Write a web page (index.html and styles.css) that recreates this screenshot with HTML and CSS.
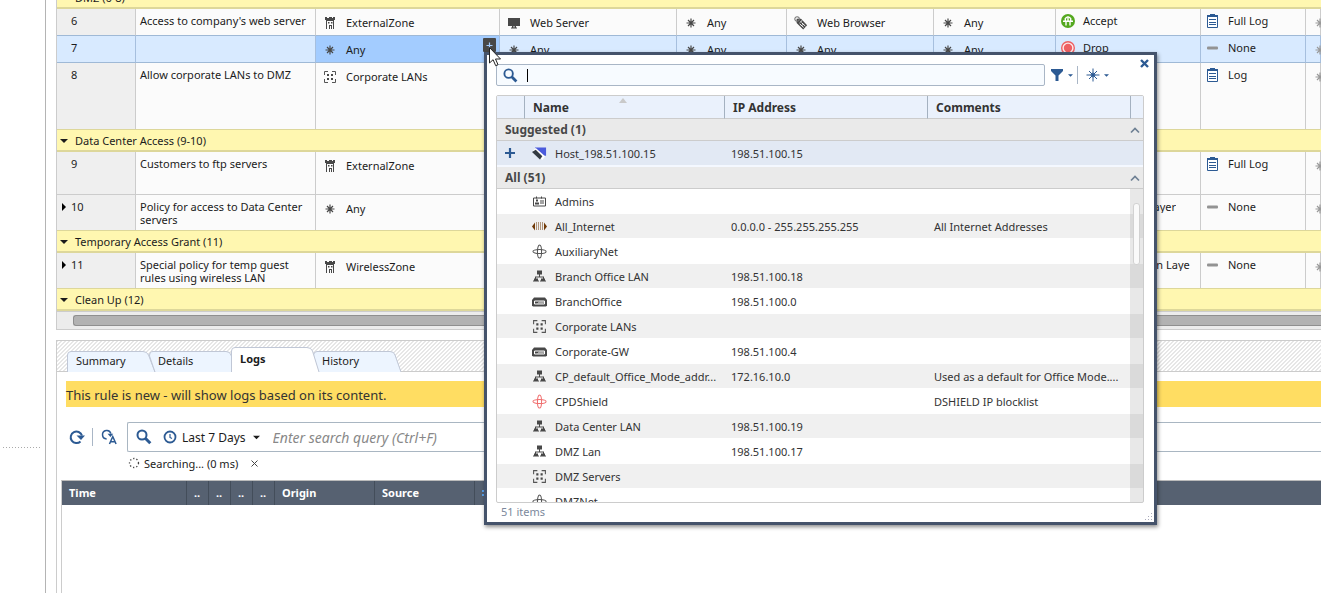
FILE: index.html
```html
<!DOCTYPE html>
<html lang="en">
<head>
<meta charset="utf-8">
<title>Access Control Policy</title>
<link rel="stylesheet" href="styles.css">
</head>
<body>
<svg class="defs" aria-hidden="true">
  <symbol id="castle" viewBox="0 0 14 14"><path fill="#484848" d="M2 1h2v1h2V1h3v1h1V1h2v3h-1v9h-1V5H4v8H3V4H2zM5 6h1.500v1.500H5zM8 6h1.500v1.500H8zM6 9h3v4H8v-3H7v3H6z"/></symbol>
  <symbol id="any" viewBox="0 0 14 14"><path stroke="currentColor" stroke-width="1.200" fill="none" d="M7 2.500v9M2.500 7h9M4 4l6 6M10 4l-6 6"/></symbol>
  <symbol id="group" viewBox="0 0 14 14"><path stroke="#555" fill="none" d="M5 1.500H1.500V5M9 1.500h3.500V5M1.500 9v3.500H5M12.500 9v3.500H9"/><path fill="#484848" d="M4 4h2v2H4zM8 4h2v2H8zM4 8h2v2H4zM8 8h2v2H8z"/></symbol>
  <symbol id="monitor" viewBox="0 0 14 14"><path fill="#484848" d="M1 2h12v8H1zM5 10h1.500v1.500h1V10H9v1.500h1v1H4v-1h1z"/></symbol>
  <symbol id="tag" viewBox="0 0 16 16"><path fill="#484848" d="M3 3h5l7 7.500-4.500 5L3 8z"/><circle cx="3.500" cy="3.500" r="2.600" fill="none" stroke="#777" stroke-width="1.200"/><path stroke="#fff" stroke-width="1.100" fill="none" d="M6.500 7.500l3-2.500M6.500 9l4.500 4M8.500 7.500l4.500 4M9 11l2-2"/></symbol>
  <symbol id="accept" viewBox="0 0 14 14"><circle cx="7" cy="7" r="7" fill="#54a81f"/><path stroke="#fff" stroke-width="1.400" fill="none" d="M2 7.300h10M7 2v5M4.300 7V4.500L6 3M9.700 7V4.500L8 3M5 7.500v4M9 7.500v4"/></symbol>
  <symbol id="drop" viewBox="0 0 14 14"><circle cx="7" cy="7" r="6.300" fill="#fde9ea" stroke="#ee6063" stroke-width="1.400"/><circle cx="7" cy="7" r="4.200" fill="#ee6063"/></symbol>
  <symbol id="log" viewBox="0 0 14 14"><path fill="#fff" stroke="#2c5a93" d="M1.500 1.500h10v12h-10z"/><path fill="#2c5a93" d="M1 1h3V0h5v1h3v2H1zM3 5h7v1H3zM3 8h7v1H3zM3 10h7v1H3z"/></symbol>
  <symbol id="none" viewBox="0 0 14 14"><rect x="1" y="5.500" width="11" height="3" rx="1" fill="#939393"/></symbol>
  <symbol id="glass" viewBox="0 0 16 16"><circle cx="6" cy="6" r="4.500" fill="none" stroke="#2c5a93" stroke-width="2"/><path d="M9.300 9.300l5 5" stroke="#2c5a93" stroke-width="3"/></symbol>
  <symbol id="right" viewBox="0 0 8 8"><path d="M2 0l4 4-4 4z"/></symbol>
  <symbol id="down" viewBox="0 0 8 8"><path d="M0 2h8L4 6z" fill="currentColor"/></symbol>
  <symbol id="up" viewBox="0 0 10 8"><path d="M1 6.500L5 2.500l4 4" fill="none" stroke="#6f8194" stroke-width="1.700"/></symbol>
  <symbol id="net" viewBox="0 0 15 14"><path fill="#484848" d="M5 1h5v4H5zM7 5h1v2H7zM3 7h9v1H3zM3 8h1v1H3zM11 8h1v1h-1zM2 9h4v2H2zM9 9h4v2H9zM1 11h6v1H1zM8 11h6v1H8z"/></symbol>
  <symbol id="gateway" viewBox="0 0 15 14"><path fill="#484848" d="M2 3h11l2 2.500V11l-1 1H1l-1-1V5.500z"/><path fill="none" stroke="#fff" d="M2.500 6.500h10v3h-10zM6 9l2-2M8 9l2-2M10 9l2-2"/></symbol>
  <symbol id="card" viewBox="0 0 15 14"><path fill="none" stroke="#484848" d="M1.500 3.500h12v8h-12z"/><path fill="#484848" d="M4 2h1v2H4zM9 2h1v2H9zM4 5h2v2H4zM3 8h4v2H3zM8 6h4v1H8zM8 8h4v1H8z"/></symbol>
  <symbol id="inet" viewBox="0 0 15 14"><path fill="#713a08" d="M0 7l3-4v8zM15 7l-3-4v8z"/><path stroke="#713a08" stroke-dasharray="1 1" d="M4 3.500h7M4 5.500h7M4 7.500h7M4 9.500h7"/></symbol>
  <symbol id="cross" viewBox="0 0 16 16"><g fill="none" stroke="currentColor" stroke-width="1.100"><ellipse cx="8" cy="8" rx="2.200" ry="7"/><ellipse cx="8" cy="8" rx="7" ry="2.200"/></g></symbol>
  <symbol id="host" viewBox="0 0 16 16"><path fill="#4b5bdc" d="M3 1.500h12v9H9z"/><path fill="#fff" d="M1 5l3-3 10 9-3 4z"/><path fill="#333a42" d="M0 6.500l4-2.500 7 7-2.500 3.500z"/></symbol>
</svg>

<div class="app">
  <aside class="rail"><div class="rail-top"></div><hr class="splitter"></aside>
  <main class="main">
    <section class="policy">
      <table class="rules">
        <colgroup><col class="c-no"><col class="c-name"><col class="c-src"><col class="c-dst"><col class="c-vpn"><col class="c-svc"><col class="c-content"><col class="c-action"><col class="c-track"><col></colgroup>
        <tbody>
        <tr class="section"><td colspan="10"><div class="sec"><svg><use href="#down"/></svg>DMZ (6-8)</div></td></tr>
        <tr class="short above">
          <td class="no"><div class="num">6</div></td><td>Access to company's web server</td>
          <td><div class="obj"><svg><use href="#castle"/></svg>ExternalZone</div></td>
          <td><div class="obj"><svg><use href="#monitor"/></svg>Web Server</div></td>
          <td><div class="obj"><svg><use href="#any"/></svg>Any</div></td>
          <td><div class="obj"><svg><use href="#tag"/></svg>Web Browser</div></td>
          <td><div class="obj"><svg><use href="#any"/></svg>Any</div></td>
          <td><div class="act"><svg><use href="#accept"/></svg>Accept</div></td>
          <td><div class="act"><svg><use href="#log"/></svg>Full Log</div></td>
          <td><div class="obj dim"><svg><use href="#any"/></svg></div></td>
        </tr>
        <tr class="short selected">
          <td class="no"><div class="num">7</div></td><td></td>
          <td class="active"><div class="obj"><svg><use href="#any"/></svg>Any</div><button class="add" aria-label="Add source"><svg viewBox="0 0 13 13"><path d="M6.500 3.500v6M3.500 6.500h6" stroke="#a3ccff" stroke-width="1.200"/></svg></button></td>
          <td><div class="obj"><svg><use href="#any"/></svg>Any</div></td>
          <td><div class="obj"><svg><use href="#any"/></svg>Any</div></td>
          <td><div class="obj"><svg><use href="#any"/></svg>Any</div></td>
          <td><div class="obj"><svg><use href="#any"/></svg>Any</div></td>
          <td><div class="act"><svg><use href="#drop"/></svg>Drop</div></td>
          <td><div class="act"><svg><use href="#none"/></svg>None</div></td>
          <td><div class="obj dim"><svg><use href="#any"/></svg></div></td>
        </tr>
        <tr class="tall last">
          <td class="no"><div class="num">8</div></td><td>Allow corporate LANs to DMZ</td>
          <td><div class="obj"><svg><use href="#group"/></svg>Corporate LANs</div></td>
          <td></td><td></td><td></td><td></td><td></td>
          <td><div class="act"><svg><use href="#log"/></svg>Log</div></td>
          <td><div class="obj dim"><svg><use href="#any"/></svg></div></td>
        </tr>
        <tr class="section"><td colspan="10"><div class="sec"><svg><use href="#down"/></svg>Data Center Access (9-10)</div></td></tr>
        <tr class="mid">
          <td class="no"><div class="num">9</div></td><td>Customers to ftp servers</td>
          <td><div class="obj"><svg><use href="#castle"/></svg>ExternalZone</div></td>
          <td></td><td></td><td></td><td></td><td></td>
          <td><div class="act"><svg><use href="#log"/></svg>Full Log</div></td>
          <td><div class="obj dim"><svg><use href="#any"/></svg></div></td>
        </tr>
        <tr class="two last">
          <td class="no"><div class="num"><svg><use href="#right"/></svg>10</div></td><td>Policy for access to Data Center servers</td>
          <td><div class="obj"><svg><use href="#any"/></svg>Any</div></td>
          <td></td><td></td><td></td><td></td>
          <td><div class="act"><svg></svg><span>Data Center Layer</span></div></td>
          <td><div class="act"><svg><use href="#none"/></svg>None</div></td>
          <td><div class="obj dim"><svg><use href="#any"/></svg></div></td>
        </tr>
        <tr class="section"><td colspan="10"><div class="sec"><svg><use href="#down"/></svg>Temporary Access Grant (11)</div></td></tr>
        <tr class="two last">
          <td class="no"><div class="num"><svg><use href="#right"/></svg>11</div></td><td>Special policy for temp guest rules using wireless LAN</td>
          <td><div class="obj"><svg><use href="#castle"/></svg>WirelessZone</div></td>
          <td></td><td></td><td></td><td></td>
          <td><div class="act"><svg></svg><span>Web Inspection Layer</span></div></td>
          <td><div class="act"><svg><use href="#none"/></svg>None</div></td>
          <td><div class="obj dim"><svg><use href="#any"/></svg></div></td>
        </tr>
        <tr class="section"><td colspan="10"><div class="sec"><svg><use href="#down"/></svg>Clean Up (12)</div></td></tr>
        </tbody>
      </table>
      <div class="hscroll"><div class="hthumb"></div></div>
    </section>

    <section class="details">
      <div class="tabs" role="tablist">
        <button class="tab" role="tab"><svg viewBox="0 0 88 21"><path d="M.5 21V4Q.5 .5 4 .5H76Q80 .5 81.500 4L88 21"/></svg><span>Summary</span></button>
        <button class="tab" role="tab"><svg viewBox="0 0 88 21"><path d="M6 21L.5 5Q.5 .5 4 .5H77Q81 .5 82 4L88 21"/></svg><span>Details</span></button>
        <button class="tab current" role="tab" aria-selected="true"><svg viewBox="0 0 88 25"><path d="M.5 25V4Q.5 .5 4 .5H76Q80 .5 81.500 4L88 25"/></svg><span>Logs</span></button>
        <button class="tab" role="tab"><svg viewBox="0 0 88 21"><path d="M5 21L.5 4Q1 .5 4 .5H77Q81 .5 82 4L88 21"/></svg><span>History</span></button>
      </div>
      <p class="banner">This rule is new - will show logs based on its content.</p>
      <div class="toolbar">
        <button class="tool" aria-label="Refresh"><svg viewBox="0 0 16 16"><path d="M11.500 12.500A5.800 5.800 0 1 1 13 6.500" fill="none" stroke="#2c5a93" stroke-width="2"/><path d="M7.500 6.500H16L12 11z" fill="#2c5a93"/></svg></button>
        <span class="bar"></span>
        <button class="tool" aria-label="Auto refresh"><svg viewBox="0 0 17 17"><path d="M6 10.500A4.500 4.500 0 1 1 10.500 5" fill="none" stroke="#2c5a93" stroke-width="1.600"/><path d="M7 5h6l-3 3.500z" fill="#2c5a93"/><path d="M9 16l3.500-8L16 16M10.300 13.500h4.400" fill="none" stroke="#2c5a93" stroke-width="1.600"/></svg></button>
        <div class="query">
          <svg class="glass"><use href="#glass"/></svg>
          <button class="period"><svg class="clock" viewBox="0 0 14 14"><circle cx="7" cy="7" r="5.500" fill="none" stroke="#2c5a93" stroke-width="1.800"/><path d="M7 4v3.500l2 1" fill="none" stroke="#2c5a93" stroke-width="1.200"/></svg>Last 7 Days<svg class="caret"><use href="#down"/></svg></button>
          <input type="text" aria-label="Search query" placeholder="Enter search query (Ctrl+F)">
        </div>
      </div>
      <div class="status">
        <svg viewBox="0 0 12 12"><circle cx="6" cy="6" r="4.500" fill="none" stroke="#444" stroke-width="1.300" stroke-dasharray="1.300 2"/></svg>
        <span>Searching... (0 ms)</span>
        <button aria-label="Stop"><svg viewBox="0 0 7 7"><path d="M.5 .5l6 6M6.500 .5l-6 6" stroke="#444"/></svg></button>
      </div>
      <div class="logs">
        <table>
          <colgroup><col class="l-time"><col class="l-dot"><col class="l-dot"><col class="l-dot"><col class="l-dot"><col class="l-wide"><col class="l-wide"><col></colgroup>
          <thead><tr><th>Time</th><th>..</th><th>..</th><th>..</th><th>..</th><th>Origin</th><th>Source</th><th><svg class="sorted" viewBox="0 0 8 8"><path d="M0 1h2v2H0zM0 5h2v2H0z" fill="#5ba4f0"/></svg></th></tr></thead>
        </table>
      </div>
    </section>
  </main>
</div>

<div class="picker" role="dialog" aria-label="Add object">
  <div class="find">
    <div class="box"><svg><use href="#glass"/></svg><span class="caret-line"></span><input type="text" aria-label="Search objects"></div>
    <button aria-label="Filter"><svg class="i14" viewBox="0 0 14 14"><path d="M1 1h12v2L8.500 7.500V13h-3V7.500L1 3z" fill="#2c5a93"/></svg><svg class="mini"><use href="#down"/></svg></button>
    <span class="bar"></span>
    <button aria-label="New object"><svg class="i14" viewBox="0 0 14 14"><path d="M7 .5v13M.5 7h13M3 3l8 8M11 3l-8 8" stroke="#2c5a93" fill="none"/><path fill="#2c5a93" d="M7 4l1 2 2 1-2 1-1 2-1-2-2-1 2-1z"/></svg><svg class="mini"><use href="#down"/></svg></button>
  </div>
  <button class="close" aria-label="Close"><svg viewBox="0 0 9 9"><path d="M1 1l7 7M8 1L1 8" stroke="#2c5a93" stroke-width="2.400"/></svg></button>
  <div class="grid">
    <table>
      <colgroup><col class="g-icon"><col class="g-name"><col class="g-ip"><col class="g-note"><col></colgroup>
      <thead><tr><th></th><th>Name<svg class="sort" viewBox="0 0 8 5"><path d="M0 5l4-5 4 5z" fill="#c9c9c9"/></svg></th><th>IP Address</th><th>Comments</th><th></th></tr></thead>
      <tbody>
        <tr class="group"><th colspan="5"><button>Suggested (1)<svg><use href="#up"/></svg></button></th></tr>
        <tr class="hit"><td><svg class="plus" viewBox="0 0 10 10"><path d="M5 0v10M0 5h10" stroke="#2c5a93" stroke-width="2.200"/></svg></td><td><div class="item"><svg><use href="#host"/></svg>Host_198.51.100.15</div></td><td>198.51.100.15</td><td></td><td></td></tr>
        <tr class="group"><th colspan="5"><button>All (51)<svg><use href="#up"/></svg></button></th></tr>
      </tbody>
      <tbody class="list">
        <tr><td></td><td><div class="item"><svg><use href="#card"/></svg>Admins</div></td><td></td><td></td><td></td></tr>
        <tr><td></td><td><div class="item"><svg><use href="#inet"/></svg>All_Internet</div></td><td>0.0.0.0 - 255.255.255.255</td><td>All Internet Addresses</td><td></td></tr>
        <tr><td></td><td><div class="item"><svg><use href="#cross"/></svg>AuxiliaryNet</div></td><td></td><td></td><td></td></tr>
        <tr><td></td><td><div class="item"><svg><use href="#net"/></svg>Branch Office LAN</div></td><td>198.51.100.18</td><td></td><td></td></tr>
        <tr><td></td><td><div class="item"><svg><use href="#gateway"/></svg>BranchOffice</div></td><td>198.51.100.0</td><td></td><td></td></tr>
        <tr><td></td><td><div class="item"><svg><use href="#group"/></svg>Corporate LANs</div></td><td></td><td></td><td></td></tr>
        <tr><td></td><td><div class="item"><svg><use href="#gateway"/></svg>Corporate-GW</div></td><td>198.51.100.4</td><td></td><td></td></tr>
        <tr><td></td><td><div class="item"><svg><use href="#net"/></svg>CP_default_Office_Mode_addr...</div></td><td>172.16.10.0</td><td>Used as a default for Office Mode....</td><td></td></tr>
        <tr><td></td><td><div class="item"><svg class="red"><use href="#cross"/></svg>CPDShield</div></td><td></td><td>DSHIELD IP blocklist</td><td></td></tr>
        <tr><td></td><td><div class="item"><svg><use href="#net"/></svg>Data Center LAN</div></td><td>198.51.100.19</td><td></td><td></td></tr>
        <tr><td></td><td><div class="item"><svg><use href="#net"/></svg>DMZ Lan</div></td><td>198.51.100.17</td><td></td><td></td></tr>
        <tr><td></td><td><div class="item"><svg><use href="#group"/></svg>DMZ Servers</div></td><td></td><td></td><td></td></tr>
        <tr><td></td><td><div class="item"><svg><use href="#cross"/></svg>DMZNet</div></td><td></td><td></td><td></td></tr>
      </tbody>
    </table>
    <div class="vscroll"><div class="vthumb"></div></div>
  </div>
  <div class="foot"><span>51 items</span><svg viewBox="0 0 8 8"><path d="M6 0h1v1H6zM3 3h1v1H3zM6 3h1v1H6zM0 6h1v1H0zM3 6h1v1H3zM6 6h1v1H6z" fill="#aab"/></svg></div>
</div>
<svg class="pointer" viewBox="0 0 12 20"><path d="M.5 .5v15.500l3.600-3.300 2.600 6 2.300-1-2.500-5.700h5z" fill="#fff" stroke="#222"/></svg>
</body>
</html>
```

FILE: styles.css
```css
* { box-sizing: border-box; }
body { margin: 0; height: 100vh; overflow: hidden; position: relative; background: #fff; color: #1c1c1c; font: 11px/13px "Noto Sans", "Open Sans", sans-serif; }
button, input { font: inherit; color: inherit; border: 0; background: none; padding: 0; margin: 0; outline: 0; }
svg { display: block; flex: none; overflow: visible; }
table { border-collapse: separate; border-spacing: 0; table-layout: fixed; width: 100%; }
.defs { position: absolute; width: 0; height: 0; }

.app { display: flex; height: 100%; }
.rail { width: 46px; flex: none; display: flex; flex-direction: column; border-right: 1px solid #b4b4b4; }
.rail-top { flex: 0 0 447px; }
.splitter { margin: 0 4px 0 3px; border: 0; height: 1px; background: repeating-linear-gradient(90deg, #aaa 0 1px, #fff 1px 3px); }
.main { flex: 1; min-width: 0; display: flex; flex-direction: column; gap: 10px; padding-left: 10px; }

.policy { border-left: 1px solid #ccc; border-bottom: 1px solid #ccc; margin-top: -14px; }
.c-no { width: 79px; } .c-name { width: 180px; } .c-src { width: 184px; } .c-dst { width: 177px; } .c-vpn { width: 110px; }
.c-svc { width: 147px; } .c-content { width: 122px; } .c-action { width: 145px; } .c-track { width: 105px; }
.rules td { position: relative; vertical-align: top; padding: 5px 4px 0 4px; background: #fbfbfb; border-right: 1px solid #ccc; border-bottom: 1px solid #ccc; }
.rules .no { padding: 5px 0 0 4px; background: #efefef; }
.rules .last td { border-bottom: 0; }
.rules .above td { border-bottom-color: #9fb9d6; }
.rules .selected td { background: #d8eaff; border-color: #a6bfde; border-bottom-color: #9fb9d6; }
.rules .selected .active { background: #a3ccff; }
.short { height: 27px; } .mid { height: 43px; } .tall { height: 66px; } .two { height: 35px; }
.rules .section td { height: 23px; padding: 1px 0 0; vertical-align: middle; background: #fff7b0; border: 0; border-top: 1px solid #ddd79a; border-bottom: 2px solid #ddd79a; }
.sec { display: flex; align-items: center; gap: 7px; padding-left: 3px; }
.sec svg, .num svg { width: 8px; height: 8px; }
.num { display: flex; align-items: center; padding-left: 10px; }
.num svg { margin: 0 3px 0 -11px; }
.obj, .act { display: flex; align-items: center; white-space: nowrap; height: 13px; }
.obj { gap: 9px; margin: 2px 0 0 3px; }
.act { gap: 8px; margin-left: 1px; }
.obj svg, .act svg { width: 14px; height: 14px; color: #484848; }
.act span { overflow: hidden; max-width: 107px; }
.rules .dim svg { color: #999; }
.add { position: absolute; right: 3px; top: 2px; width: 13px; height: 14px; background: #484848; border-radius: 1px; }
.add svg { width: 13px; height: 13px; }
.hscroll { border-top: 1px solid #ccc; background: #ececec; padding: 3px 0 3px 16px; }
.hthumb { height: 11px; background: #b2b2b2; border: 1px solid #8f8f8f; border-right: 0; border-radius: 3px 0 0 3px; }

.details { flex: 1; display: flex; flex-direction: column; border-left: 1px solid #ccc; border-top: 1px solid #ccc; }
.tabs { display: flex; align-items: flex-end; height: 31px; padding-left: 10px; border-bottom: 1px solid #ccc; background-image: linear-gradient(135deg, #e6e6e6 12%, #fff 20% 42%, #e6e6e6 50% 62%, #fff 70% 92%, #e6e6e6); background-size: 4px 4px; }
.tab { position: relative; width: 82px; height: 21px; text-align: left; padding: 0 0 2px 9px; margin-bottom: -1px; }
.tab svg { position: absolute; left: 0; bottom: 0; width: 88px; height: 21px; fill: #edf5ff; stroke: #c0c7d6; }
.tab span { position: relative; }
.tab.current { height: 25px; z-index: 1; font-weight: 700; }
.tab.current svg { height: 25px; fill: #fff; }
.banner { margin: 9px 0 0 9px; padding: 5px 0 3px; background: #ffdd62; font-size: 13px; line-height: 18px; color: #333; }
.toolbar { display: flex; align-items: center; margin: 15px 0 0 12px; }
.tool svg { width: 16px; height: 16px; }
.bar { width: 1px; height: 18px; background: #a9b6c6; margin: 0 8px 0 7px; }
.query { flex: 1; display: flex; align-items: center; height: 30px; margin-left: 10px; padding-left: 8px; border: 1px solid #a9b6c2; border-right: 0; border-radius: 2px 0 0 2px; font-size: 13px; }
.glass { width: 16px; height: 16px; }
.period { display: flex; align-items: center; gap: 5px; margin-left: 11px; font-size: 12px; }
.clock { width: 14px; height: 14px; }
.caret { width: 7px; height: 7px; margin-left: 2px; }
.query input { flex: 1; margin-left: 13px; padding-top: 2px; font-size: 14px; line-height: 20px; font-style: italic; }
.query input::placeholder { color: #888; opacity: 1; }
.status { display: flex; align-items: center; height: 16px; margin: 3px 0 9px 71px; gap: 4px; }
.status svg { width: 12px; height: 12px; }
.status button { margin-left: 9px; }
.status button svg { width: 7px; height: 7px; }
.logs { flex: 1; margin-left: 4px; border-left: 1px solid #ccc; border-top: 1px solid #bbb; }
.l-time { width: 125px; } .l-dot { width: 22px; } .l-wide { width: 100px; }
.logs th { height: 24px; padding: 0 0 1px 7px; text-align: left; color: #fff; background: #566171; border-right: 1px solid #434d5a; }
.logs th:last-child { border-right: 0; }
.sorted { width: 8px; height: 8px; }

.picker { position: absolute; left: 484px; top: 52px; width: 673px; height: 473px; display: flex; flex-direction: column; padding: 9px 10px 0 9px; border: 3px solid #45536b; background: #fff; box-shadow: 1px 2px 4px rgba(0,0,0,.45); color: #333; }
.find { display: flex; align-items: center; margin-bottom: 9px; padding-right: 35px; }
.box { flex: 1; display: flex; align-items: center; height: 22px; margin-right: 5px; padding-left: 6px; border: 1px solid #a9b6c6; border-radius: 2px; background: #f7fbff; }
.box svg { width: 15px; height: 15px; }
.caret-line { width: 1px; height: 13px; margin-left: 9px; background: #000; }
.box input { flex: 1; }
.find button { display: flex; align-items: center; gap: 4px; }
.find .bar { margin: 0 8px 0 4px; }
.i14 { width: 14px; height: 14px; }
.mini { width: 5px; height: 5px; color: #2c5a93; }
.close { position: absolute; right: 5px; top: 4px; width: 9px; height: 9px; }
.grid { position: relative; flex: 1; min-height: 0; overflow: hidden; border: 1px solid #ccc; border-radius: 2px; }
.g-icon { width: 28px; } .g-name { width: 200px; } .g-ip { width: 203px; } .g-note { width: 203px; }
.grid thead th { position: relative; height: 23px; padding: 0 0 0 8px; text-align: left; background: #eaf1fc; border-right: 1px solid #a4b1c0; border-bottom: 1px solid #ccc; font-size: 12px; }
.grid thead th:last-child { border-right: 0; }
.sort { position: absolute; left: 94px; top: 2px; width: 8px; height: 5px; }
.group th { height: 22px; padding: 0; background: #eaeaea; border-bottom: 1px solid #ccc; }
.group button { display: flex; align-items: center; justify-content: space-between; width: 100%; padding: 0 3px 0 8px; font-weight: 700; font-size: 12px; color: #484848; }
.group svg { width: 10px; height: 8px; }
.grid td { height: 25px; padding: 1px 0 0 6px; white-space: nowrap; border-bottom: 1px solid #fff; }
.grid .hit td { height: 26px; padding-top: 0; background: #e2e9f4; border-bottom: 2px solid #f4f8ff; }
.list tr:nth-child(even) td { background: #f0f0f0; }
.item { display: flex; align-items: center; gap: 8px; margin-left: 1px; }
.item svg { width: 15px; height: 15px; color: #555; }
.item svg.red { color: #f07070; }
.plus { width: 10px; height: 10px; margin-left: 2px; }
.vscroll { position: absolute; right: 0; top: 93px; bottom: 0; width: 13px; padding: 14px 3px 0; background: rgba(0,0,0,.09); }
.vthumb { height: 62px; border: 1px solid #d2d2d2; border-radius: 3px; background: #fafafa; }
.foot { display: flex; align-items: center; justify-content: space-between; height: 19px; margin-right: -9px; padding: 0 0 2px 5px; color: #7c889c; }
.foot svg { width: 8px; height: 8px; margin-top: 10px; }
.pointer { position: absolute; left: 489px; top: 47px; width: 12px; height: 20px; }
```
